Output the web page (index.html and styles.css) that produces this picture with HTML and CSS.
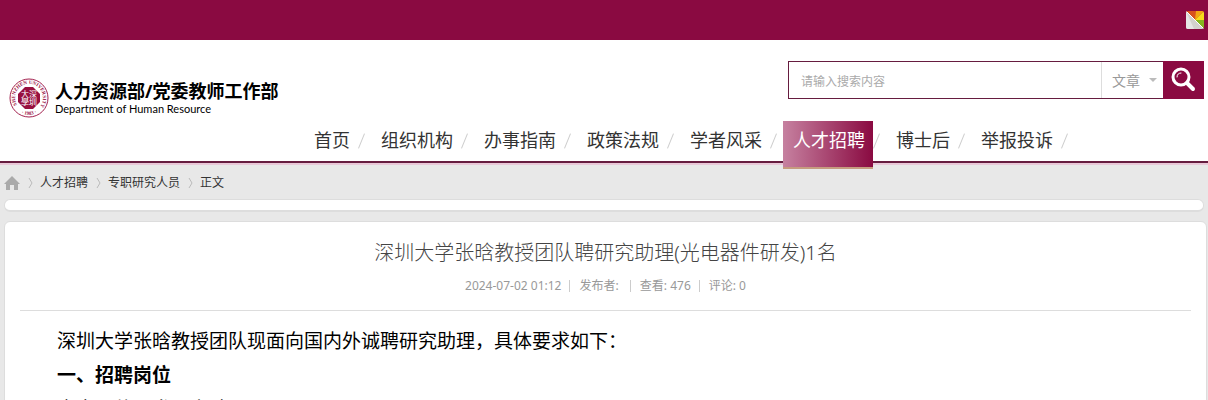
FILE: index.html
```html
<!DOCTYPE html>
<html lang="zh-CN">
<head>
    <meta charset="UTF-8">
    <meta name="viewport" content="width=device-width, initial-scale=1.0">
    <title>深圳大学张晗教授团队聘研究助理(光电器件研发)1名</title>
    <link rel="stylesheet" href="styles.css">
</head>
<body>
    <div class="topbar">
        <button class="skin-btn" aria-label="切换风格">
            <svg width="18" height="18" viewBox="0 0 18 18">
                <path d="M0 0H18L9 9Z" fill="#d8521d"/>
                <path d="M10 0H18L9 9Z" fill="#f3a712"/>
                <path d="M18 0V9H9Z" fill="#f5dc1b"/>
                <path d="M18 9V18L9 9Z" fill="#86b51f"/>
                <path d="M0 0L18 18H0Z" fill="#d3d1ce"/>
                <path d="M0 0L8 18H0Z" fill="#e6e6e4"/>
                <path d="M0 0L18 18" stroke="#fff"/>
            </svg>
        </button>
    </div>
    <header class="header">
        <div class="header-main">
            <a class="logo" href="#">
                <svg class="seal" width="40" height="40" viewBox="0 0 40 40">
                    <defs>
                        <path id="ring-top" d="M8 27A14 14 0 1 1 32 27"/>
                        <path id="ring-bottom" d="M8 32A17 17 0 0 0 32 32"/>
                    </defs>
                    <circle cx="20" cy="20" r="19" fill="#fff" stroke="#a3224f"/>
                    <path d="M16 9H24L31 16V24L24 31H16L9 24V16Z" fill="#98103f"/>
                    <text class="seal-name"><textPath href="#ring-top">SHENZHEN UNIVERSITY</textPath></text>
                    <text class="seal-year"><textPath href="#ring-bottom" startOffset="50%">· 1983 ·</textPath></text>
                    <text class="seal-zh" x="20" y="19">大深</text>
                    <text class="seal-zh" x="20" y="27">學圳</text>
                </svg>
                <span class="logo-text">
                    <strong>人力资源部/党委教师工作部</strong>
                    <span>Department of Human Resource</span>
                </span>
            </a>
            <form class="search">
                <input type="text" placeholder="请输入搜索内容" aria-label="搜索内容">
                <div class="search-type">
                    <select aria-label="搜索类型">
                        <option>文章</option>
                    </select>
                </div>
                <button type="button" aria-label="搜索">
                    <svg width="28" height="26" viewBox="0 0 28 26" fill="none" stroke="#fff" stroke-linecap="round">
                        <circle cx="11" cy="10" r="8" stroke-width="3"/>
                        <path d="M17 16L23 22" stroke-width="4"/>
                        <path d="M7 10C7 7 9 6 11 6" stroke-width="1"/>
                    </svg>
                </button>
            </form>
        </div>
        <nav class="nav">
            <a href="#">首页</a><span class="slash"></span>
            <a href="#">组织机构</a><span class="slash"></span>
            <a href="#">办事指南</a><span class="slash"></span>
            <a href="#">政策法规</a><span class="slash"></span>
            <a href="#">学者风采</a><span class="slash"></span>
            <a href="#" class="active">人才招聘</a><span class="slash"></span>
            <a href="#">博士后</a><span class="slash"></span>
            <a href="#">举报投诉</a><span class="slash"></span>
        </nav>
    </header>
    <main class="page">
        <div class="crumbs">
            <a class="home" href="#" aria-label="首页">
                <svg width="16" height="14" viewBox="0 0 16 14">
                    <path d="M8 0L16 8H14V14H10V9H6V14H2V8H0Z" fill="#aaa"/>
                </svg>
            </a>
            <svg class="sep" width="5" height="12" viewBox="0 0 5 12"><path d="M1 1L4 6L1 11" fill="none" stroke="#bbb"/></svg>
            <a href="#">人才招聘</a>
            <svg class="sep" width="5" height="12" viewBox="0 0 5 12"><path d="M1 1L4 6L1 11" fill="none" stroke="#bbb"/></svg>
            <a href="#">专职研究人员</a>
            <svg class="sep" width="5" height="12" viewBox="0 0 5 12"><path d="M1 1L4 6L1 11" fill="none" stroke="#bbb"/></svg>
            <span>正文</span>
        </div>
        <div class="strip"></div>
        <article class="article">
            <h1>深圳大学张晗教授团队聘研究助理(光电器件研发)1名</h1>
            <p class="meta">
                <time>2024-07-02 01:12</time>
                <span>发布者:&nbsp;</span>
                <span>查看: 476</span>
                <span>评论: 0</span>
            </p>
            <div class="content">
                <p>深圳大学张晗教授团队现面向国内外诚聘研究助理，具体要求如下：</p>
                <p><strong>一、招聘岗位</strong></p>
                <p>光电器件研发研究助理</p>
            </div>
        </article>
    </main>
</body>
</html>
```

FILE: styles.css
```css
body {
    margin: 0;
    height: 100vh;
    overflow: hidden;
    background: #e8e8e8;
    color: #333;
    font-family: "Noto Sans", "Noto Sans CJK SC", sans-serif;
    font-size: 12px;
}
a {
    color: inherit;
    text-decoration: none;
}
.topbar {
    display: flex;
    justify-content: flex-end;
    align-items: center;
    height: 40px;
    padding-right: 4px;
    background: #8a0a41;
}
.skin-btn {
    display: flex;
    padding: 0;
    border: none;
    border-radius: 2px;
    overflow: hidden;
    background: none;
}
.header {
    background: #fff;
    border-bottom: 2px solid #661c3f;
    box-shadow: 0 2px 0 #e9c8d8;
}
.header-main {
    display: flex;
    justify-content: space-between;
    align-items: flex-start;
    height: 81px;
    padding: 0 4px;
}
.logo {
    display: flex;
    align-items: center;
    gap: 6px;
    padding: 38px 0 0 5px;
    color: #000;
}
.logo-text strong {
    display: block;
    font-size: 18px;
    line-height: 22px;
}
.logo-text span {
    display: block;
    font-family: Lato, sans-serif;
    font-size: 11px;
    line-height: 14px;
}
.seal text {
    fill: #98103f;
    font-family: "Liberation Serif", "Noto Sans CJK SC", serif;
}
.seal .seal-name {
    font-size: 5px;
    font-weight: bold;
}
.seal .seal-year {
    font-size: 5px;
    font-weight: bold;
    text-anchor: middle;
}
.seal .seal-zh {
    fill: #fff;
    font-size: 8px;
    text-anchor: middle;
}
.search {
    display: flex;
    width: 416px;
    height: 38px;
    margin-top: 21px;
}
.search input {
    flex: 1;
    min-width: 0;
    padding: 0 12px;
    border: 1px solid #661c3f;
    border-right: none;
    font: 12px "Noto Sans CJK SC", sans-serif;
}
.search input::placeholder {
    color: #aaa;
}
.search-type {
    position: relative;
    display: flex;
    border: 1px solid #661c3f;
    border-width: 1px 0;
}
.search-type::after {
    content: "";
    position: absolute;
    right: 6px;
    top: 16px;
    border: 4px solid transparent;
    border-top-color: #bbb;
    border-bottom: none;
}
.search select {
    width: 62px;
    padding: 0 10px;
    border: none;
    border-left: 1px solid #ddd;
    appearance: none;
    background: #fff;
    color: #999;
    font: 14px "Noto Sans CJK SC", sans-serif;
}
.search button {
    display: flex;
    justify-content: center;
    align-items: center;
    width: 41px;
    padding: 0;
    border: none;
    background: #8a0a41;
}
.nav {
    display: flex;
    height: 40px;
    padding-left: 304px;
    font-size: 18px;
    line-height: 38px;
}
.nav a {
    padding: 0 8px 0 10px;
    white-space: nowrap;
}
.nav .slash {
    width: 7px;
    height: 16px;
    margin: 12px 6px 0 0;
    background: linear-gradient(to right, #ccc, #ccc) no-repeat center / 1px 16px;
    transform: rotate(22deg);
}
.nav .active {
    height: 46px;
    border-bottom: 2px solid #c69c7f;
    background: linear-gradient(to right, #c681a0, #8a0a41);
    color: #fff;
}
.page {
    padding: 0 1px 0 4px;
}
.crumbs {
    display: flex;
    align-items: center;
    height: 36px;
    padding-top: 2px;
    line-height: 36px;
}
.crumbs .home {
    display: flex;
}
.crumbs .sep {
    margin: 0 7px 0 8px;
}
.strip {
    height: 10px;
    margin: -2px 3px 0 0;
    border: 1px solid #ddd;
    border-bottom-width: 2px;
    border-radius: 6px;
    background: #fff;
}
.article {
    margin-top: 9px;
    padding: 0 15px;
    border: 1px solid #ddd;
    border-radius: 6px;
    background: #fff;
}
.article h1 {
    margin: 0;
    padding-top: 14px;
    color: #444;
    font-size: 20px;
    font-weight: 300;
    line-height: 34px;
    text-align: center;
}
.meta {
    display: flex;
    justify-content: center;
    margin: 0;
    padding: 6px 0 14px;
    border-bottom: 1px solid #ddd;
    color: #999;
    line-height: 20px;
}
.meta span {
    margin-left: 8px;
    padding-left: 10px;
    background: linear-gradient(#ccc, #ccc) no-repeat left center / 1px 12px;
}
.content {
    padding: 12px 37px;
    color: #000;
    font-family: "Noto Sans CJK SC", sans-serif;
    font-size: 19px;
    line-height: 34px;
}
.content p {
    margin: 0;
}
```
